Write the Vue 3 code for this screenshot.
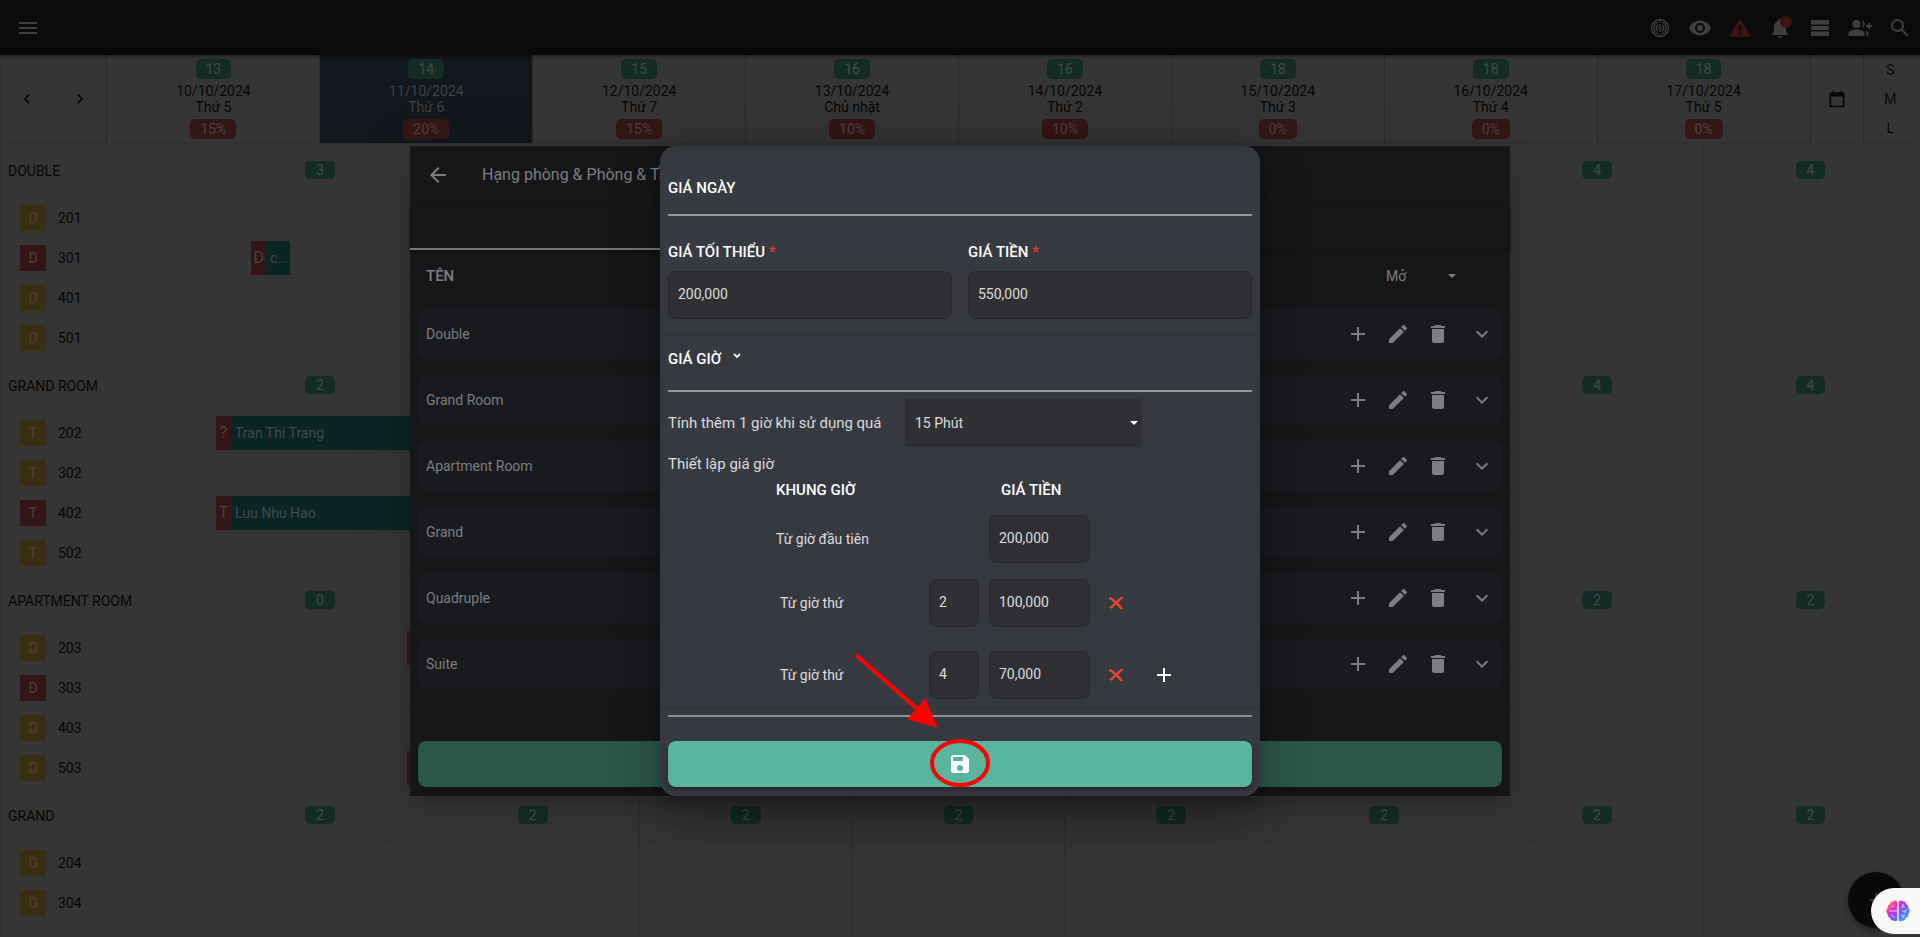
<script setup>
import { ref } from 'vue'

const icons = {
  menu: 'M3 18h18v-2H3v2zm0-5h18v-2H3v2zm0-7v2h18V6H3z',
  eye: 'M12 4.5C7 4.500 2.730 7.610 1 12c1.730 4.390 6 7.500 11 7.500s9.270-3.110 11-7.500c-1.730-4.390-6-7.500-11-7.500zM12 17a5 5 0 1 1 0-10 5 5 0 0 1 0 10zm0-8a3 3 0 1 0 0 6 3 3 0 0 0 0-6z',
  alert: 'M12 3.500c.5 0 .9.300 1.200.800l8.500 14.500c.6 1-.1 2.200-1.200 2.200h-17c-1.100 0-1.800-1.200-1.200-2.200l8.500-14.500c.3-.5.700-.8 1.200-.8zM11 9v6h2V9h-2zm0 7.500v2h2v-2h-2z',
  bell: 'M12 22c1.100 0 2-.9 2-2h-4c0 1.100.890 2 2 2zm6-6v-5c0-3.070-1.640-5.640-4.500-6.320V4c0-.83-.67-1.500-1.500-1.500s-1.500.67-1.500 1.500v.68C7.630 5.360 6 7.920 6 11v5l-2 2v1h16v-1l-2-2z',
  rows: 'M3 4h18v4.500H3zM3 10h18v4H3zM3 15.500h18V20H3z',
  people: 'M8.500 4a4 4 0 1 1 0 8 4 4 0 0 1 0-8zM.5 20v-2.500c0-2.800 4.500-4 8-4s8 1.200 8 4V20H.5zM13.500 4.100a4 4 0 0 1 0 7.800 5.500 5.500 0 0 0 0-7.800zM17 14.300c2 .7 3.500 1.700 3.500 3.200V20h-2v-2.500c0-1.300-.6-2.400-1.500-3.200zM20 7h2v2h2v2h-2v2h-2v-2h-2V9h2z',
  search: 'M15.500 14h-.79l-.28-.27A6.470 6.470 0 0 0 16 9.500 6.500 6.500 0 1 0 9.500 16c1.610 0 3.090-.59 4.230-1.570l.27.28v.79l5 4.990L20.490 19l-4.990-5zm-6 0C7.010 14 5 11.990 5 9.500S7.010 5 9.500 5 14 7.010 14 9.500 11.990 14 9.500 14z',
  left: 'M15.410 7.410 14 6l-6 6 6 6 1.410-1.410L10.830 12z',
  right: 'M8.590 16.590 13.170 12 8.590 7.410 10 6l6 6-6 6z',
  calendar: 'M19 4h-1V2h-2v2H8V2H6v2H5a2 2 0 0 0-2 2v14a2 2 0 0 0 2 2h14a2 2 0 0 0 2-2V6a2 2 0 0 0-2-2zm0 16H5V9h14v11z',
  back: 'M20 11H7.830l5.590-5.590L12 4l-8 8 8 8 1.410-1.410L7.830 13H20v-2z',
  plus: 'M19 13h-6v6h-2v-6H5v-2h6V5h2v6h6v2z',
  pencil: 'M3 17.250V21h3.750L17.810 9.940l-3.750-3.750L3 17.250zM20.710 7.040c.39-.39.39-1.020 0-1.410l-2.340-2.340c-.39-.39-1.020-.39-1.410 0l-1.830 1.830 3.750 3.750 1.830-1.830z',
  trash: 'M6 19c0 1.100.9 2 2 2h8c1.100 0 2-.9 2-2V7H6v12zM19 4h-3.500l-1-1h-5l-1 1H5v2h14V4z',
  down: 'M7.410 8.590 12 13.170l4.590-4.580L18 10l-6 6-6-6z',
  save: 'M17 3H5a2 2 0 0 0-2 2v14a2 2 0 0 0 2 2h14a2 2 0 0 0 2-2V7l-4-4zm-5 16a3 3 0 1 1 0-6 3 3 0 0 1 0 6zm3-10H5V5h10v4z',
  cross: 'M5 5.400C7.800 6.400 10.300 8.300 12.200 10 14.300 8 16.500 6.100 18.600 5l1.200 1.500c-2 1.500-3.900 3.300-5.500 5.300 2 2 3.800 4.200 4.900 6l-2.200 1.500c-1.400-2.100-3.100-3.900-4.800-5.600-1.600 1.800-3.300 3.500-5.200 4.700L4.600 17c2-1.500 4-3.300 5.600-5.300C8.400 10 6.300 8.500 4 7.400z'
}

const topIcons = [
  { name: 'eye', label: 'Xem' },
  { name: 'alert', label: 'Cảnh báo', tone: 'warn' },
  { name: 'bell', label: 'Thông báo', dot: true },
  { name: 'rows', label: 'Danh sách' },
  { name: 'people', label: 'Thêm khách' },
  { name: 'search', label: 'Tìm kiếm' }
]

const days = [
  { free: 13, date: '10/10/2024', day: 'Thứ 5', rate: '15%' },
  { free: 14, date: '11/10/2024', day: 'Thứ 6', rate: '20%', today: true },
  { free: 15, date: '12/10/2024', day: 'Thứ 7', rate: '15%' },
  { free: 16, date: '13/10/2024', day: 'Chủ nhật', rate: '10%' },
  { free: 16, date: '14/10/2024', day: 'Thứ 2', rate: '10%' },
  { free: 18, date: '15/10/2024', day: 'Thứ 3', rate: '0%' },
  { free: 18, date: '16/10/2024', day: 'Thứ 4', rate: '0%' },
  { free: 18, date: '17/10/2024', day: 'Thứ 5', rate: '0%' }
]

// start and span are counted in day columns
const groups = [
  {
    name: 'DOUBLE', counts: [3, null, null, null, null, null, 4, 4],
    rooms: [
      { no: '201', tag: 'D' },
      { no: '301', tag: 'D', busy: true, booking: { tag: 'D', guest: 'c...', start: 0.175, span: 0.18 } },
      { no: '401', tag: 'D' },
      { no: '501', tag: 'D' }
    ]
  },
  {
    name: 'GRAND ROOM', counts: [2, null, null, null, null, null, 4, 4],
    rooms: [
      { no: '202', tag: 'T', booking: { tag: '?', guest: 'Tran Thi Trang', start: 0.01, span: 1.3 } },
      { no: '302', tag: 'T' },
      { no: '402', tag: 'T', busy: true, booking: { tag: 'T', guest: 'Luu Nhu Hao', start: 0.01, span: 1.3 } },
      { no: '502', tag: 'T' }
    ]
  },
  {
    name: 'APARTMENT ROOM', counts: [0, null, null, null, null, null, 2, 2],
    rooms: [
      { no: '203', tag: 'D', booking: { tag: '', guest: '', start: 0.905, span: 1 } },
      { no: '303', tag: 'D', busy: true },
      { no: '403', tag: 'D' },
      { no: '503', tag: 'D', booking: { tag: '', guest: '', start: 0.905, span: 1 } }
    ]
  },
  {
    name: 'GRAND', counts: [2, 2, 2, 2, 2, 2, 2, 2],
    rooms: [
      { no: '204', tag: 'D' },
      { no: '304', tag: 'D' },
      { no: '', tag: '' }
    ]
  }
]

const roomTypes = ['Double', 'Grand Room', 'Apartment Room', 'Grand', 'Quadruple', 'Suite']
const rowActions = [
  { name: 'plus', label: 'Thêm' },
  { name: 'pencil', label: 'Sửa' },
  { name: 'trash', label: 'Xóa' },
  { name: 'down', label: 'Mở rộng' }
]

const minPrice = ref('200,000')
const price = ref('550,000')
const step = ref('15 Phút')
const status = ref('Mở')
const firstHour = ref('200,000')
const tiers = ref([
  { hour: '2', price: '100,000' },
  { hour: '4', price: '70,000' }
])

function bookingStyle(b) {
  return { left: `${((1 + b.start) / 9) * 100}%`, width: `${(b.span / 9) * 100}%` }
}
</script>

<template>
  <div class="app">
    <header class="topbar">
      <button class="icon-btn" aria-label="Menu">
        <svg class="icon" viewBox="0 0 24 24"><path :d="icons.menu" /></svg>
      </button>
      <div class="top-actions">
        <button class="icon-btn" aria-label="Vân tay">
          <svg class="icon print" viewBox="0 0 24 24">
            <circle cx="12" cy="12" r="8.500" />
            <path d="M12 3v3M12 18v3M10 6.200a6.100 6.100 0 0 0 0 11.600M14 6.200a6.100 6.100 0 0 1 0 11.600M10.500 8.700a3.600 3.600 0 0 0-.7 6.200M13.500 15.300a3.600 3.600 0 0 0 .7-6.200M12 8v3l-1.500 1M12 16v-3l1.500-1" />
          </svg>
        </button>
        <button v-for="i in topIcons" :key="i.name" class="icon-btn" :class="i.tone" :aria-label="i.label">
          <svg class="icon" viewBox="0 0 24 24"><path :d="icons[i.name]" /></svg>
          <span v-if="i.dot" class="dot"></span>
        </button>
      </div>
    </header>

    <main class="board">
      <div class="days">
        <div class="pager">
          <button class="icon-btn" aria-label="Trước"><svg class="icon small" viewBox="0 0 24 24"><path :d="icons.left" /></svg></button>
          <button class="icon-btn" aria-label="Sau"><svg class="icon small" viewBox="0 0 24 24"><path :d="icons.right" /></svg></button>
        </div>
        <div v-for="d in days" :key="d.date" class="day" :class="{ today: d.today }">
          <span class="chip green">{{ d.free }}</span>
          <div class="date">{{ d.date }}<br />{{ d.day }}</div>
          <span class="chip red">{{ d.rate }}</span>
        </div>
        <div class="pick">
          <button class="icon-btn" aria-label="Chọn ngày"><svg class="icon small" viewBox="0 0 24 24"><path :d="icons.calendar" /></svg></button>
        </div>
        <div class="sizes">
          <button>S</button>
          <button>M</button>
          <button>L</button>
        </div>
      </div>

      <section v-for="g in groups" :key="g.name">
        <div class="line group">
          <div class="cell group-name">{{ g.name }}</div>
          <div v-for="(c, n) in g.counts" :key="n" class="cell count">
            <span v-if="c !== null" class="chip count-chip">{{ c }}</span>
          </div>
        </div>
        <div v-for="r in g.rooms" :key="r.no" class="line room">
          <div class="cell room-name">
            <span v-if="r.tag" class="tag" :class="{ busy: r.busy }">{{ r.tag }}</span>
            <span>{{ r.no }}</span>
          </div>
          <div v-for="n in 8" :key="n" class="cell"></div>
          <div v-if="r.booking" class="booking" :style="bookingStyle(r.booking)">
            <span class="booking-tag">{{ r.booking.tag }}</span>
            <span class="booking-guest">{{ r.booking.guest }}</span>
          </div>
        </div>
      </section>
    </main>

    <button class="fab" aria-label="Tạo mới"><svg class="icon" viewBox="0 0 24 24"><path :d="icons.plus" /></svg></button>

    <div class="overlay">
      <section class="panel">
        <div class="panel-bar">
          <button class="icon-btn" aria-label="Quay lại"><svg class="icon" viewBox="0 0 24 24"><path :d="icons.back" /></svg></button>
          <h1>Hạng phòng &amp; Phòng &amp; Tầng</h1>
        </div>
        <div class="tabs"><span class="tab-line"></span></div>
        <div class="list-head">
          <span class="list-title">TÊN</span>
          <div class="status">
            <select v-model="status" aria-label="Trạng thái"><option>Mở</option></select>
            <svg class="caret" viewBox="0 0 8 4"><path d="M0 0h8L4 4z" /></svg>
          </div>
        </div>
        <ul class="types">
          <li v-for="t in roomTypes" :key="t">
            <span>{{ t }}</span>
            <div class="type-actions">
              <button v-for="a in rowActions" :key="a.name" class="icon-btn" :aria-label="a.label">
                <svg class="icon" viewBox="0 0 24 24"><path :d="icons[a.name]" /></svg>
              </button>
            </div>
          </li>
        </ul>
        <button class="wide-btn dim" aria-label="Lưu hạng phòng"></button>
      </section>
    </div>

    <div class="overlay">
      <form class="modal" @submit.prevent>
        <section class="block">
          <h2 class="title first">GIÁ NGÀY</h2>
          <div class="fields">
            <label class="field">
              <span class="label">GIÁ TỐI THIỂU <span class="req">*</span></span>
              <input v-model="minPrice" class="input" type="text" />
            </label>
            <label class="field">
              <span class="label">GIÁ TIỀN <span class="req">*</span></span>
              <input v-model="price" class="input" type="text" />
            </label>
          </div>
        </section>
        <section class="block hours">
          <h2 class="title second">
            GIÁ GIỜ
            <svg class="mini" viewBox="0 0 8 6"><path d="M1 1l3 3 3-3" /></svg>
          </h2>
          <div class="step">
            <label for="step">Tính thêm 1 giờ khi sử dụng quá</label>
            <div class="select">
              <select id="step" v-model="step"><option>15 Phút</option></select>
              <svg class="caret" viewBox="0 0 8 4"><path d="M0 0h8L4 4z" /></svg>
            </div>
          </div>
          <p class="setup">Thiết lập giá giờ</p>
          <div class="tier tier-head">
            <span class="tier-label">KHUNG GIỜ</span>
            <span class="tier-price">GIÁ TIỀN</span>
          </div>
          <div class="tier">
            <label class="tier-label" for="first">Từ giờ đầu tiên</label>
            <input id="first" v-model="firstHour" class="input tier-price" type="text" />
          </div>
          <div v-for="(t, n) in tiers" :key="n" class="tier next">
            <label class="tier-label" :for="`hour${n}`">Từ giờ thứ</label>
            <input :id="`hour${n}`" v-model="t.hour" class="input tier-hour" type="text" />
            <input v-model="t.price" class="input tier-price" type="text" aria-label="Giá tiền" />
            <div class="tier-actions">
              <button type="button" class="icon-btn remove" aria-label="Xóa"><svg class="icon" viewBox="0 0 24 24"><path :d="icons.cross" /></svg></button>
              <button v-if="n === tiers.length - 1" type="button" class="icon-btn" aria-label="Thêm"><svg class="icon" viewBox="0 0 24 24"><path :d="icons.plus" /></svg></button>
            </div>
          </div>
        </section>
        <footer class="foot">
          <button class="wide-btn" aria-label="Lưu"><svg class="icon" viewBox="0 0 24 24"><path :d="icons.save" /></svg></button>
        </footer>
        <svg class="pointer" viewBox="0 0 144 140" aria-hidden="true">
          <path class="shaft" d="M7 6 73 64" />
          <path class="head" d="M75 49 87 77 58 69z" />
          <ellipse cx="110" cy="113" rx="28" ry="22" />
        </svg>
      </form>
    </div>

    <button class="assistant" aria-label="Trợ lý">
      <svg viewBox="0 0 24 24">
        <defs>
          <linearGradient id="brain" x1="0" y1="0" x2="1" y2="1">
            <stop offset="0.05" stop-color="#ffa02e" />
            <stop offset=".3" stop-color="#f12fc0" />
            <stop offset=".58" stop-color="#7a55f5" />
            <stop offset="0.9" stop-color="#2cb4ff" />
          </linearGradient>
        </defs>
        <path fill="url(#brain)" d="M11.300 3v18c-.5 1.500-3 1.800-4.200.5-1.700.1-3-1-3-2.700C2 18.300 1 16.500 1.800 15-.2 13.600-.2 10.400 1.800 9 1.200 7 2.300 5.500 4 5.200 4 3.300 5.500 2 7.300 2.300c1-1.300 3.400-1 4 .7zM12.700 3v18c.5 1.500 3 1.800 4.200.5 1.700.1 3-1 3-2.700 2.100-.5 3.100-2.300 2.300-3.800 2-1.400 2-4.600 0-6 .6-2-.5-3.500-2.200-3.800 0-1.900-1.500-3.200-3.300-2.900-1-1.300-3.400-1-4 .7z" />
        <path class="folds" d="M3 12h8M5 8c1.500 0 2.500-.6 3-2M5.500 16c.5 1.500 1.500 2 3 2M15 8.500l2-1 2 1M17 5v2.500M16 12h3l2-1.500M19 12v2M15 16l2 1 2-1M17 17v2" />
      </svg>
    </button>
  </div>
</template>

<style>
body {
  background: #363636;
}
</style>

<style scoped>
.app {
  position: relative;
  height: 100vh;
  overflow: hidden;
  background: #363636;
  color: #060606;
  font: 14px/20px Roboto, "Noto Sans", sans-serif;
}
.app * {
  box-sizing: border-box;
}
button,
input,
select {
  margin: 0;
  padding: 0;
  border: 0;
  background: none;
  color: inherit;
  font: inherit;
  appearance: none;
  outline: none;
}
h1,
h2,
p,
ul {
  margin: 0;
  padding: 0;
}
.icon {
  display: block;
  width: 24px;
  height: 24px;
  fill: currentColor;
}
.icon.small {
  width: 20px;
  height: 20px;
}
.icon-btn {
  position: relative;
  display: flex;
  flex: none;
  align-items: center;
  justify-content: center;
  width: 40px;
  height: 40px;
}

.topbar {
  position: relative;
  z-index: 1;
  display: flex;
  align-items: center;
  justify-content: space-between;
  height: 55px;
  padding: 0 0 0 8px;
  background: #0a0a0a;
  color: #3e3e3e;
  box-shadow: 0 1px 4px rgba(0, 0, 0, 0.5);
}
.top-actions {
  display: flex;
}
.warn {
  color: #3a1413;
}
.icon.print {
  fill: none;
  stroke: currentColor;
  stroke-width: 1.300;
}
.dot {
  position: absolute;
  top: 8px;
  right: 8px;
  width: 12px;
  height: 12px;
  border-radius: 50%;
  background: #3a1413;
}

.board {
  padding-right: 2px;
}
.board > section,
.days {
  border-right: 1px solid #303030;
  border-left: 1px solid #303030;
}
.days {
  display: grid;
  grid-template-columns: 2fr repeat(8, 4fr) 1fr 1fr;
  height: 88px;
  box-shadow: 0 1px #303030;
}
.days > * {
  border-right: 1px solid #2a2a2a;
}
.days > :last-child {
  border-right: 0;
}
.pager,
.pick {
  display: flex;
  align-items: center;
  justify-content: center;
}
.pager {
  gap: 13px;
}
.day {
  display: flex;
  flex-direction: column;
  align-items: center;
  gap: 4px;
  padding-top: 4px;
}
.date {
  line-height: 16px;
  text-align: center;
}
.today {
  background: #12171d;
  color: #404143;
}
.chip {
  padding: 0 10px;
  border-radius: 5px;
  color: #434c49;
  line-height: 20px;
}
.green {
  background: #142c24;
}
.red {
  background: #351616;
  color: #504041;
}
.sizes {
  display: flex;
  flex-direction: column;
  justify-content: space-around;
}

.line {
  position: relative;
  display: grid;
  grid-template-columns: repeat(9, 1fr);
  border-bottom: 1px solid #303030;
}
.cell {
  display: flex;
  align-items: center;
  border-right: 1px solid #303030;
}
.cell:nth-child(9) {
  border-right: 0;
}
.group {
  height: 55px;
}
.room {
  height: 40px;
}
.group-name {
  padding: 2px 0 0 7px;
}
.count {
  justify-content: center;
}
.count-chip {
  padding: 0 11px;
  background: #142c26;
  line-height: 18px;
}
.room-name {
  gap: 12px;
  padding-left: 19px;
}
.tag {
  width: 26px;
  background: #3a2e13;
  color: #51452b;
  line-height: 26px;
  text-align: center;
}
.tag.busy {
  background: #351616;
  color: #504041;
}
.booking {
  position: absolute;
  top: 3px;
  bottom: 2px;
  display: flex;
  min-width: 39px;
  overflow: hidden;
  background: #0a2523;
  color: #424b4a;
  line-height: 34px;
  white-space: nowrap;
}
.booking-tag {
  flex: none;
  width: 15px;
  background: #351616;
  color: #504041;
  font-size: 16px;
  text-align: center;
}
.booking-guest {
  padding-left: 4px;
}
.fab {
  position: absolute;
  right: 16px;
  bottom: 9px;
  display: flex;
  align-items: center;
  justify-content: center;
  width: 56px;
  height: 56px;
  border-radius: 50%;
  background: #090909;
  color: #363636;
  box-shadow: 0 3px 6px rgba(0, 0, 0, 0.4);
}

.overlay {
  position: absolute;
  inset: 0;
  z-index: 2;
  display: flex;
  align-items: center;
  justify-content: center;
  padding-top: 5px;
}
.panel {
  width: 100%;
  max-width: 1100px;
  padding-bottom: 9px;
  background: #161618;
  color: #7e7e80;
  box-shadow: 0 11px 15px -7px rgba(0, 0, 0, 0.2), 0 9px 46px 8px rgba(0, 0, 0, 0.14);
}
.panel-bar {
  display: flex;
  align-items: center;
  gap: 24px;
  height: 56px;
  padding: 2px 0 0 8px;
}
.panel-bar h1 {
  font-size: 16px;
  font-weight: 400;
}
.tabs {
  display: flex;
  align-items: flex-end;
  height: 48px;
  box-shadow: 0 1px 2px #101012;
}
.tab-line {
  width: 50%;
  height: 2px;
  background: #767676;
}
.list-head {
  display: flex;
  justify-content: space-between;
  padding: 16px 54px 23px 16px;
}
.list-title {
  font-size: 15px;
  font-weight: 500;
}
.status {
  position: relative;
  width: 70px;
}
.status select {
  width: 100%;
}
.caret {
  position: absolute;
  top: 50%;
  right: 0;
  width: 8px;
  height: 4px;
  margin-top: -2px;
  fill: currentColor;
  pointer-events: none;
}
.types {
  display: flex;
  flex-direction: column;
  gap: 16px;
  padding: 0 8px;
  list-style: none;
}
.types li {
  display: flex;
  align-items: center;
  justify-content: space-between;
  height: 50px;
  padding-left: 8px;
  border-radius: 8px;
  background: #191a1e;
}
.type-actions {
  display: flex;
}
.type-actions .icon-btn:last-child {
  margin-left: 4px;
}
.wide-btn {
  display: flex;
  align-items: center;
  justify-content: center;
  width: 100%;
  height: 46px;
  border-radius: 8px;
  background: #5ab59f;
  color: #fff;
  box-shadow: 0 3px 5px rgba(0, 0, 0, 0.3);
}
.wide-btn.dim {
  width: calc(100% - 16px);
  margin: 52px 8px 0;
  background: #2a5749;
}

.modal {
  position: relative;
  width: 100%;
  max-width: 600px;
  padding-bottom: 9px;
  border-radius: 16px;
  background: #373940;
  color: #dcdcdd;
  box-shadow: 0 11px 15px -7px rgba(0, 0, 0, 0.2), 0 24px 38px 3px rgba(0, 0, 0, 0.14), 0 9px 46px 8px rgba(0, 0, 0, 0.12);
}
.block {
  padding: 0 8px;
  border-bottom: 1px solid #303238;
}
.title {
  border-bottom: 2px solid #94979b;
  color: #fff;
  font-size: 15px;
  font-weight: 500;
}
.title.first {
  padding: 32px 0 16px;
}
.title.second {
  display: flex;
  gap: 12px;
  padding: 14px 0 21px;
}
.mini {
  width: 8px;
  height: 6px;
  margin-top: 4px;
  fill: none;
  stroke: #fff;
  stroke-width: 1.800;
}
.fields {
  display: grid;
  grid-template-columns: 1fr 1fr;
  gap: 16px;
  padding: 26px 0 15px;
}
.field {
  display: grid;
  gap: 9px;
}
.label {
  color: #fff;
  font-size: 15px;
  font-weight: 500;
}
.req {
  color: #e53935;
}
.input {
  width: 100%;
  min-width: 0;
  height: 48px;
  padding: 0 9px 2px;
  border: 1px solid #29292d;
  border-radius: 8px;
  background: #303034;
}
.step {
  display: flex;
  align-items: center;
  gap: 20px;
  margin-top: 7px;
}
.step label {
  width: 217px;
  font-size: 15px;
}
.select {
  position: relative;
  width: 237px;
}
.select select {
  width: 100%;
  height: 48px;
  padding: 0 10px;
  background: #303034;
}
.select .caret {
  right: 4px;
  fill: #fff;
}
.setup {
  margin: 7px 0 6px;
  font-size: 15px;
}
.tier {
  display: grid;
  grid-template-columns: 143px 50px 101px 1fr;
  column-gap: 10px;
  align-items: center;
  padding-left: 108px;
}
.tier + .tier {
  margin-top: 16px;
}
.tier-head + .tier {
  margin-top: 15px;
}
.next + .next {
  margin-top: 24px;
}
.next .tier-label {
  padding-left: 4px;
}
.tier-head {
  color: #fff;
  font-size: 15px;
  font-weight: 500;
}
.tier-price {
  grid-column: 3;
}
.tier-head .tier-price {
  padding-left: 12px;
}
.tier-label {
  grid-column: 1;
}
.tier-label,
.tier-hour,
.tier-price,
.tier-actions {
  grid-row: 1;
}
.tier-actions {
  display: flex;
  gap: 8px;
  margin-left: -4px;
  color: #fff;
}
.remove {
  color: #f44336;
}
.remove .icon {
  width: 22px;
  height: 22px;
}
.hours {
  padding-bottom: 8px;
}
.foot {
  margin: 7px 8px 0;
  padding-top: 24px;
  border-top: 2px solid #8c8f93;
}
.pointer {
  position: absolute;
  bottom: 6px;
  left: calc(50% - 110px);
  width: 144px;
  height: 140px;
  fill: none;
  stroke: #f00;
  stroke-width: 4;
  pointer-events: none;
}
.shaft {
  stroke-linecap: round;
}
.head {
  fill: #f00;
  stroke-width: 1;
}
.assistant {
  position: absolute;
  right: 0;
  bottom: 3px;
  z-index: 3;
  display: flex;
  align-items: center;
  width: 49px;
  height: 46px;
  padding-left: 15px;
  border-radius: 23px 0 0 23px;
  background: #f8f8f8;
}
.assistant svg {
  width: 24px;
  height: 24px;
}
.folds {
  fill: none;
  stroke: #f8f8f8;
  stroke-opacity: 0.7;
}
</style>
